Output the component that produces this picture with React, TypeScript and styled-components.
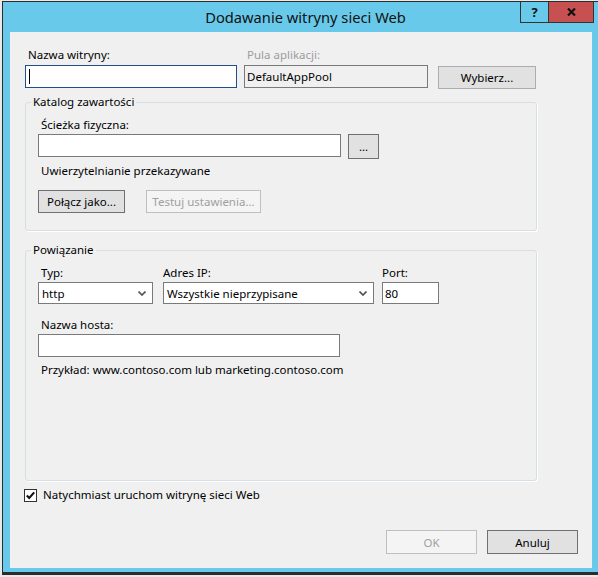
import styled, { createGlobalStyle } from 'styled-components';

const GlobalStyle = createGlobalStyle`
  html, body {
    margin: 0;
    padding: 0;
  }
  body {
    background: #e9e9e9;
    font-family: 'Segoe UI', 'Noto Sans', sans-serif;
    font-size: 11.5px;
    color: #000;
  }
  * {
    box-sizing: border-box;
  }
`;

const Chevron = () => (
  <svg width="8" height="5" viewBox="0 0 8 5">
    <polyline points="0.5,0.5 4,4 7.5,0.5" fill="none" stroke="#555" strokeWidth="1.7" />
  </svg>
);

const App = () => {
  return (
    <>
      <GlobalStyle />
      <Screen>
        <Window>
          <TitleBar>
            <span />
            <Title>Dodawanie witryny sieci Web</Title>
            <CaptionButtons>
              <HelpButton>?</HelpButton>
              <CloseButton>
                <svg width="9" height="8" viewBox="0 0 9 8">
                  <path d="M1 0.5 L8 7.5 M8 0.5 L1 7.5" stroke="#111" strokeWidth="2.2" />
                </svg>
              </CloseButton>
            </CaptionButtons>
          </TitleBar>

          <Client>
            <TopRow>
              <Label>Nazwa witryny:</Label>
              <Label $disabled>Pula aplikacji:</Label>
              <span />
              <TextBox $width={212} $focused>
                <Caret />
              </TextBox>
              <TextBox $width={184} $readOnly>
                DefaultAppPool
              </TextBox>
              <Button $width={98} $light>
                Wybierz...
              </Button>
            </TopRow>

            <Group>
              <Legend>Katalog zawartości</Legend>
              <Label>Ścieżka fizyczna:</Label>
              <PathRow>
                <TextBox $width={303} />
                <Button $width={31} $height={25}>
                  ...
                </Button>
              </PathRow>
              <Note>Uwierzytelnianie przekazywane</Note>
              <ButtonRow>
                <Button $width={87}>Połącz jako...</Button>
                <Button $width={115} disabled>
                  Testuj ustawienia...
                </Button>
              </ButtonRow>
            </Group>

            <Group $grow>
              <Legend>Powiązanie</Legend>
              <BindingGrid>
                <Label>Typ:</Label>
                <Label $indent={0}>Adres IP:</Label>
                <Label $indent={0}>Port:</Label>
                <Select $width={115}>
                  <span>http</span>
                  <Chevron />
                </Select>
                <Select $width={211}>
                  <span>Wszystkie nieprzypisane</span>
                  <Chevron />
                </Select>
                <TextBox $width={57} $height={22}>
                  80
                </TextBox>
              </BindingGrid>
              <Label $gap={13}>Nazwa hosta:</Label>
              <TextBox $width={302} />
              <Note $gap={5}>Przykład: www.contoso.com lub marketing.contoso.com</Note>
            </Group>

            <CheckRow>
              <CheckBox>
                <svg width="11" height="11" viewBox="0 0 11 11">
                  <path d="M1.8 5.6 L4.2 8 L9.2 2.4" fill="none" stroke="#111" strokeWidth="2.1" />
                </svg>
              </CheckBox>
              Natychmiast uruchom witrynę sieci Web
            </CheckRow>

            <Footer>
              <Button $width={91} $height={24} disabled>
                OK
              </Button>
              <Button $width={91} $height={24}>
                Anuluj
              </Button>
            </Footer>
          </Client>
        </Window>
      </Screen>
    </>
  );
};

export default App;

const Screen = styled.div`
  width: 598px;
  height: 577px;
  overflow: hidden;
  padding: 1px 0 0 2px;
`;

const Window = styled.div`
  width: 597px;
  height: 574px;
  display: flex;
  flex-direction: column;
  background: #69c9ea;
  border: 1px solid #2c2c2c;
  border-right: none;
  border-bottom-width: 3px;
  padding-bottom: 4px;
`;

const TitleBar = styled.div`
  height: 30px;
  flex: none;
  display: grid;
  grid-template-columns: 1fr auto 1fr;
  align-items: start;
`;

const Title = styled.div`
  line-height: 30px;
  font-size: 14.7px;
  padding-left: 9px;
  color: #111;
  white-space: nowrap;
`;

const CaptionButtons = styled.div`
  justify-self: end;
  display: flex;
  margin-right: 5px;
`;

const CaptionButton = styled.div`
  height: 21px;
  display: flex;
  align-items: center;
  justify-content: center;
  border: 1px solid #333;
  border-top: none;
`;

const HelpButton = styled(CaptionButton)`
  width: 29px;
  font-size: 13px;
  font-weight: bold;
  color: #111;
`;

const CloseButton = styled(CaptionButton)`
  width: 45px;
  border-left: none;
  background: #c75050;
`;

const Client = styled.div`
  flex: 1;
  margin: 0 7px;
  background: #f0f0f0;
  display: flex;
  flex-direction: column;
  padding: 15px 14px 14px 15px;
`;

const TopRow = styled.div`
  display: grid;
  grid-template-columns: 212px 184px 98px;
  column-gap: 7px;
  row-gap: 1px;
  align-items: start;

  & > button {
    margin: 1px 0 0 3px;
  }
`;

const Label = styled.div<{ $disabled?: boolean; $indent?: number; $gap?: number }>`
  line-height: 16px;
  white-space: nowrap;
  padding-left: ${(p) => (p.$indent ?? 3)}px;
  margin-top: ${(p) => p.$gap ?? 0}px;
  margin-bottom: 1px;
  color: ${(p) => (p.$disabled ? '#9d9d9d' : '#000')};
`;

const Note = styled.div<{ $gap?: number }>`
  line-height: 16px;
  padding-left: 3px;
  margin-top: ${(p) => p.$gap ?? 4}px;
  white-space: nowrap;
`;

const TextBox = styled.div<{ $width: number; $height?: number; $focused?: boolean; $readOnly?: boolean }>`
  width: ${(p) => p.$width}px;
  height: ${(p) => p.$height ?? 23}px;
  display: flex;
  align-items: center;
  padding: 0 2px;
  white-space: nowrap;
  background: ${(p) => (p.$readOnly ? '#f0f0f0' : '#fff')};
  border: 1px solid ${(p) => (p.$focused ? '#1f4f86' : '#7a7a7a')};
`;

const Caret = styled.span`
  width: 1px;
  height: 15px;
  margin-left: 1px;
  background: #000;
`;

const Select = styled.div<{ $width: number }>`
  width: ${(p) => p.$width}px;
  height: 22px;
  display: flex;
  align-items: center;
  justify-content: space-between;
  padding: 0 6px 0 3px;
  background: #fff;
  border: 1px solid #7a7a7a;
  white-space: nowrap;

  & > svg {
    margin-top: 1px;
  }
`;

const Button = styled.button<{ $width: number; $height?: number; $light?: boolean }>`
  width: ${(p) => p.$width}px;
  height: ${(p) => p.$height ?? 23}px;
  padding: 0;
  font: inherit;
  color: #000;
  background: #e1e1e1;
  border: 1px solid ${(p) => (p.$light ? '#adadad' : '#707070')};
  border-radius: 0;
  white-space: nowrap;

  &:disabled {
    color: #a0a0a0;
    background: #f4f4f4;
    border-color: #bfbfbf;
  }
`;

const Group = styled.fieldset<{ $grow?: boolean }>`
  width: 512px;
  margin: ${(p) => (p.$grow ? '11px' : '5px')} 0 0;
  padding: 7px 12px ${(p) => (p.$grow ? '16px' : '17px')};
  border: 1px solid #d5dfe5;
  border-radius: 3px;
  box-shadow: 1px 1px 0 #fff;
  min-width: 0;
  flex: ${(p) => (p.$grow ? 1 : 'none')};
`;

const Legend = styled.legend`
  line-height: 16px;
  padding: 0 2px;
  margin-left: -7px;
`;

const PathRow = styled.div`
  display: flex;
  align-items: flex-start;
  gap: 7px;
`;

const ButtonRow = styled.div`
  display: flex;
  gap: 21px;
  margin-top: 11px;
`;

const BindingGrid = styled.div`
  display: grid;
  grid-template-columns: 115px 211px 57px;
  column-gap: 10px;
  align-items: start;

  & > :nth-child(3n) {
    margin-left: -2px;
  }
`;

const CheckRow = styled.div`
  display: flex;
  align-items: center;
  gap: 6px;
  line-height: 16px;
  margin: 6px 0 0 -1px;
`;

const CheckBox = styled.span`
  width: 13px;
  height: 13px;
  display: flex;
  align-items: center;
  justify-content: center;
  background: #fff;
  border: 1px solid #333;
`;

const Footer = styled.div`
  display: flex;
  justify-content: flex-end;
  gap: 10px;
  margin-top: 27px;
`;
